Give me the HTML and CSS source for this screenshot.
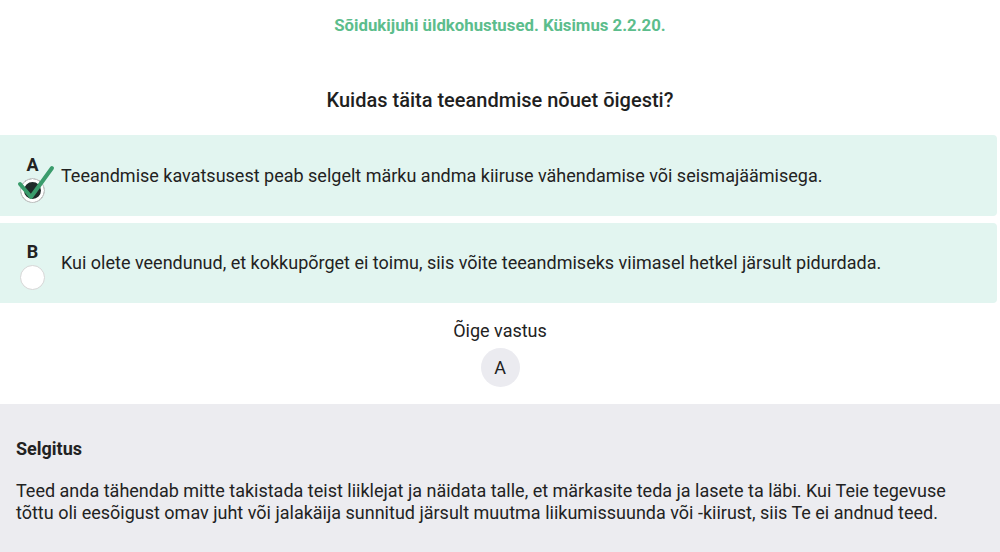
FILE: index.html
```html
<html>
   <head>
      <title>Küsimus 2.2.20</title>
      <meta charset="utf-8">
      <link rel="stylesheet" href="styles.css">
   </head>

   <body>
      <div class="page">
         <div class="topic">Sõidukijuhi üldkohustused. Küsimus 2.2.20.</div>
         <h1 class="question">Kuidas täita teeandmise nõuet õigesti?</h1>

         <div class="options">
            <div class="option">
               <div class="marker">
                  <span class="letter">A</span>
                  <span class="radio checked"></span>
                  <svg class="tick" width="40" height="40" viewBox="0 0 40 40">
                     <path d="M4 19 L15 32 L36 3" fill="none" stroke="#3a9c6c" stroke-width="4" stroke-linecap="round" stroke-linejoin="round"/>
                  </svg>
               </div>
               <div class="text">Teeandmise kavatsusest peab selgelt märku andma kiiruse vähendamise või seismajäämisega.</div>
            </div>
            <div class="option">
               <div class="marker">
                  <span class="letter">B</span>
                  <span class="radio"></span>
               </div>
               <div class="text">Kui olete veendunud, et kokkupõrget ei toimu, siis võite teeandmiseks viimasel hetkel järsult pidurdada.</div>
            </div>
         </div>

         <div class="answer">
            <div class="answer-title">Õige vastus</div>
            <div class="answer-badge">A</div>
         </div>

         <div class="explain">
            <h2 class="explain-title">Selgitus</h2>
            <p class="explain-text">Teed anda tähendab mitte takistada teist liiklejat ja näidata talle, et märkasite teda ja lasete ta läbi. Kui Teie tegevuse tõttu oli eesõigust omav juht või jalakäija sunnitud järsult muutma liikumissuunda või -kiirust, siis Te ei andnud teed.</p>
         </div>
      </div>
   </body>
</html>
```

FILE: styles.css
```css
body {margin: 0; background: #fff; font-family: Roboto, "Liberation Sans", sans-serif; color: #222;}
.page {display: flex; flex-direction: column; width: 1000px; overflow: hidden;}

.topic {text-align: center; color: #5cbd8c; font-weight: bold; font-size: 16.8px; line-height: 20px; padding-top: 15px;}
.question {text-align: center; font-size: 20px; font-weight: 500; line-height: 26px; margin: 0; padding-top: 52px; color: #1f1f1f;}

.options {display: flex; flex-direction: column; gap: 7px; margin: 22px 3px 0 -4px;}
.option {display: flex; align-items: center; background: #e2f5f0; border-radius: 4px; min-height: 80px; padding: 0 16px 0 24px; gap: 16px;}
.option:first-child {min-height: 81px;}
.marker {position: relative; display: flex; flex-direction: column; align-items: center; width: 25px; margin-top: 8px;}
.letter {font-weight: bold; font-size: 18px; line-height: 20px; color: #222; margin-top: -2px;}
.radio {width: 23px; height: 23px; border-radius: 50%; background: #fff; border: 1px solid #d6d6d6; margin-top: 3px;}
.radio.checked {background: #1f2b29; box-shadow: inset 0 0 0 3px #fff;}
.tick {position: absolute; left: -4px; top: 8px;}
.text {font-size: 18px; line-height: 24px; color: #222;}

.answer {display: flex; flex-direction: column; align-items: center; padding-top: 17px; height: 101px; box-sizing: border-box;}
.answer-title {font-size: 18px; line-height: 22px;}
.answer-badge {width: 39px; height: 39px; border-radius: 50%; background: #ebebf0; display: flex; align-items: center; justify-content: center; font-size: 18px; margin-top: 6px;}

.explain {background: #ececf0; padding: 34px 16px 40px;}
.explain-title {font-size: 18px; font-weight: bold; line-height: 22px; margin: 0;}
.explain-text {font-size: 18px; line-height: 22px; margin: 20px 0 0; max-width: 940px;}
```
